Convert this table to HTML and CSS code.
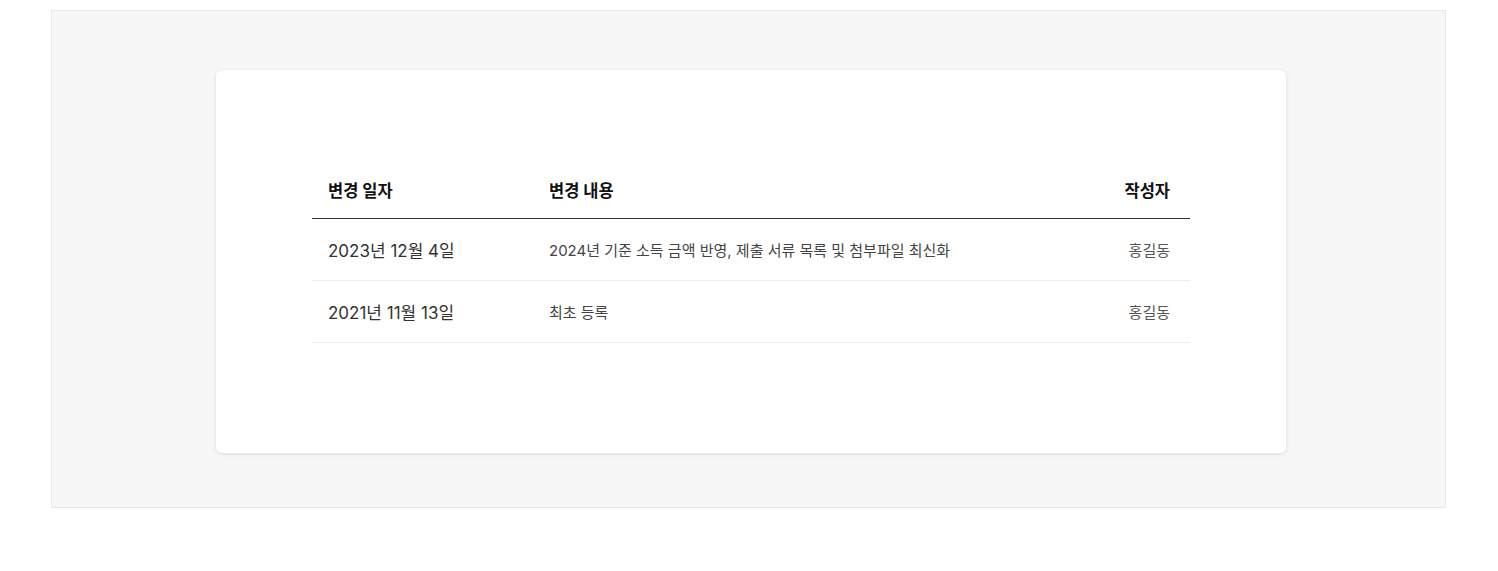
FILE: index.html
```html
<!DOCTYPE html>
<html lang="ko">
<head>
<meta charset="utf-8">
<title>변경 이력</title>
<link rel="stylesheet" href="styles.css">
</head>
<body>
<div class="frame">
  <div class="card">
    <div class="history">
      <div class="row head">
        <div class="cell date">변경 일자</div>
        <div class="cell desc">변경 내용</div>
        <div class="cell author">작성자</div>
      </div>
      <div class="row">
        <div class="cell date">2023년 12월 4일</div>
        <div class="cell desc">2024년 기준 소득 금액 반영, 제출 서류 목록 및 첨부파일 최신화</div>
        <div class="cell author">홍길동</div>
      </div>
      <div class="row">
        <div class="cell date">2021년 11월 13일</div>
        <div class="cell desc">최초 등록</div>
        <div class="cell author">홍길동</div>
      </div>
    </div>
  </div>
</div>
</body>
</html>
```
FILE: styles.css
```css
* { box-sizing: border-box; }
html, body { margin: 0; padding: 0; background: #fff; }
body {
  font-family: "Inter", "Noto Sans CJK KR", sans-serif;
  padding: 10px 52px 0 51px;
}
.frame {
  width: 1395px;
  height: 498px;
  background: #f7f7f7;
  border: 1px solid #e8e8e8;
  padding: 59px 0 0 164px;
}
.card {
  width: 1070px;
  height: 383px;
  background: #fff;
  border-radius: 6px;
  box-shadow: 0 1px 4px rgba(0,0,0,0.12);
  padding: 96px 95px 0 96px;
}
.history { width: 878px; }
.row {
  display: grid;
  grid-template-columns: 221px 1fr auto;
  align-items: center;
  height: 62px;
  border-bottom: 1px solid #eeeeee;
}
.row.head {
  height: 53px;
  border-bottom: 1px solid #333;
  padding-bottom: 5px;
}
.cell { padding: 0 16px; white-space: nowrap; }
.cell.author { text-align: right; padding-right: 20px; }
.row .date { font-size: 17px; color: #333; }
.row .desc { font-size: 15px; color: #444; }
.row .author { font-size: 15px; color: #555; }
.head .date, .head .desc, .head .author {
  font-size: 16.5px;
  font-weight: 700;
  color: #111;
}
```
